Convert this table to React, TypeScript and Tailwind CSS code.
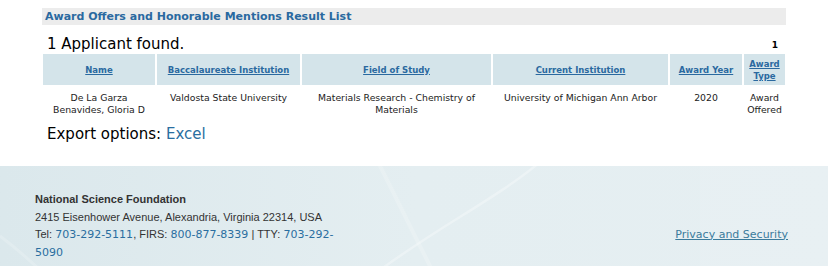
import React from 'react';

const verdana = "font-['DejaVu_Sans',Verdana,sans-serif]";

type Applicant = {
  name: string;
  bacc: string;
  field: string;
  current: string;
  year: string;
  type: string;
};

const rows: Applicant[] = [
  {
    name: 'De La Garza Benavides, Gloria D',
    bacc: 'Valdosta State University',
    field: 'Materials Research - Chemistry of Materials',
    current: 'University of Michigan Ann Arbor',
    year: '2020',
    type: 'Award Offered',
  },
];

const columns = [
  { label: 'Name', w: 'w-[112px]' },
  { label: 'Baccalaureate Institution', w: 'w-[143px]' },
  { label: 'Field of Study', w: 'w-[189px]' },
  { label: 'Current Institution', w: 'w-[175px]' },
  { label: 'Award Year', w: 'w-[72px]' },
  { label: 'Award Type', w: 'w-[41px]' },
];

// faint swoosh lines in the footer background
function FooterSwoosh() {
  return (
    <svg className="absolute inset-0 pointer-events-none" width="828" height="100" viewBox="0 0 828 100">
      <path d="M380 104 C 440 60, 500 30, 540 -4" stroke="#ffffff" strokeOpacity="0.3" strokeWidth="2.5" fill="none" />
      <path d="M378 -4 C 395 30, 415 70, 432 104" stroke="#ffffff" strokeOpacity="0.18" strokeWidth="4" fill="none" />
      <path d="M0 70 C 20 85, 30 95, 40 104" stroke="#ffffff" strokeOpacity="0.18" strokeWidth="3" fill="none" />
      <rect x="700" y="0" width="128" height="100" fill="#ffffff" fillOpacity="0.1" />
    </svg>
  );
}

export default function App() {
  return (
    <div className={`w-[828px] h-[276px] bg-white ${verdana} overflow-hidden`}>
      {/* results */}
      <div className="pt-[8px] pl-[42px] pr-[42px]">
        <div className="bg-[#ececec] h-[17px] flex items-center pl-[3px]">
          <h2 className="text-[11px] font-bold text-[#2a69a0] leading-none">
            Award Offers and Honorable Mentions Result List
          </h2>
        </div>
        <div className="flex items-end justify-between pl-[5px] pr-[8px] h-[29px] pb-[2px]">
          <span className="text-[15px] text-black leading-none">1 Applicant found.</span>
          <span className="text-[9px] font-bold text-black leading-none mb-[2px]">1</span>
        </div>
        <table className="table-fixed border-separate border-spacing-x-[2px] border-spacing-y-0 -ml-[1px] w-[746px]">
          <thead>
            <tr>
              {columns.map((c) => (
                <th key={c.label} className={`${c.w} h-[31px] bg-[#d4e4ea] px-[2px] text-center align-middle`}>
                  <a className="text-[8.5px] font-bold text-[#2a69a0] underline leading-[12px] block">
                    {c.label}
                  </a>
                </th>
              ))}
            </tr>
          </thead>
          <tbody>
            {rows.map((r) => (
              <tr key={r.name} className="text-[9.3px] text-[#222] leading-[12px] text-center align-top">
                <td className="pt-[7px] px-[4px]">{r.name}</td>
                <td className="pt-[7px] px-[2px]">{r.bacc}</td>
                <td className="pt-[7px] px-[8px]">{r.field}</td>
                <td className="pt-[7px] px-[2px]">{r.current}</td>
                <td className="pt-[7px] px-[2px]">{r.year}</td>
                <td className="pt-[7px]">{r.type}</td>
              </tr>
            ))}
          </tbody>
        </table>
        <p className="text-[15px] text-black leading-none pl-[5px] mt-[11px]">
          Export options: <a className="text-[#2a6ea0]">Excel</a>
        </p>
      </div>

      {/* footer */}
      <footer className="relative mt-[24px] h-[100px] bg-gradient-to-r from-[#dbe8ec] via-[#e4eef1] to-[#e6eff2] flex items-end justify-between pl-[35px] pr-[40px] pb-[5px]">
        <FooterSwoosh />
        <div className="relative font-['Liberation_Sans',Arial,sans-serif] text-[11px] leading-[17.5px] text-[#333]">
          <div className="font-bold">National Science Foundation</div>
          <div>2415 Eisenhower Avenue, Alexandria, Virginia 22314, USA</div>
          <div className="w-[310px]">
            Tel: <a className={`${verdana} text-[#2a6ea0]`}>703-292-5111</a>, FIRS:{' '}
            <a className={`${verdana} text-[#2a6ea0]`}>800-877-8339</a> | TTY:{' '}
            <a className={`${verdana} text-[#2a6ea0]`}>703-292-5090</a>
          </div>
        </div>
        <a className="relative text-[11px] text-[#3b7b9c] underline mb-[18px]">Privacy and Security</a>
      </footer>
    </div>
  );
}
